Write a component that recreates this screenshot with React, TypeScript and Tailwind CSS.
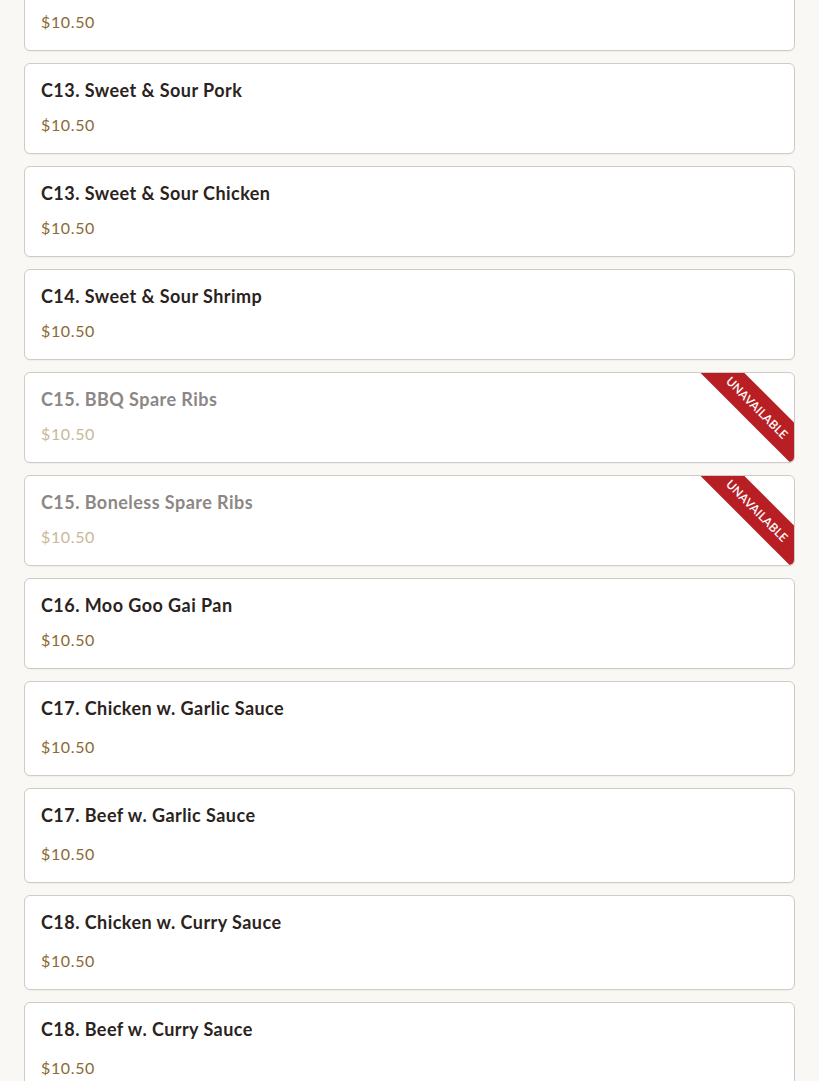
import React from "react";

type Item = { name: string; price: string; unavailable?: boolean; tall?: boolean };

const items: Item[] = [
  { name: "C12. Pepper Steak", price: "$10.50" },
  { name: "C13. Sweet & Sour Pork", price: "$10.50" },
  { name: "C13. Sweet & Sour Chicken", price: "$10.50" },
  { name: "C14. Sweet & Sour Shrimp", price: "$10.50" },
  { name: "C15. BBQ Spare Ribs", price: "$10.50", unavailable: true },
  { name: "C15. Boneless Spare Ribs", price: "$10.50", unavailable: true },
  { name: "C16. Moo Goo Gai Pan", price: "$10.50" },
  { name: "C17. Chicken w. Garlic Sauce", price: "$10.50", tall: true },
  { name: "C17. Beef w. Garlic Sauce", price: "$10.50", tall: true },
  { name: "C18. Chicken w. Curry Sauce", price: "$10.50", tall: true },
  { name: "C18. Beef w. Curry Sauce", price: "$10.50", tall: true },
];

function MenuCard({ item }: { item: Item }) {
  const off = item.unavailable;
  return (
    <div className="relative overflow-hidden rounded-md border border-[#cfcbc5] bg-white px-4 pt-[14px] pb-4 shadow-[0_1px_1px_rgba(0,0,0,0.04)]">
      <div className={`text-[18px] font-bold leading-6 tracking-[0.025em] ${off ? "text-[#8c8784]" : "text-[#2a2320]"}`}>
        {item.name}
      </div>
      <div
        className={`${item.tall ? "mt-[15px]" : "mt-[11px]"} text-[16px] leading-6 tracking-[0.04em] ${off ? "text-[#c7b899]" : "text-[#8a6a34]"}`}
      >
        {item.price}
      </div>
      {off && (
        <div className="absolute top-[22px] right-[-66px] flex h-[31px] w-[200px] rotate-45 items-center justify-center bg-[#b81f24] pr-[8px] text-[12px] font-semibold tracking-[0.01em] text-white">
          UNAVAILABLE
        </div>
      )}
    </div>
  );
}

export default function App() {
  return (
    <div className="min-h-screen bg-[#f9f8f5] font-['Lato','Liberation_Sans',sans-serif]">
      <div className="-mt-[40px] flex flex-col gap-3 px-6 pb-6">
        {items.map((it, i) => (
          <MenuCard key={i} item={it} />
        ))}
      </div>
    </div>
  );
}
